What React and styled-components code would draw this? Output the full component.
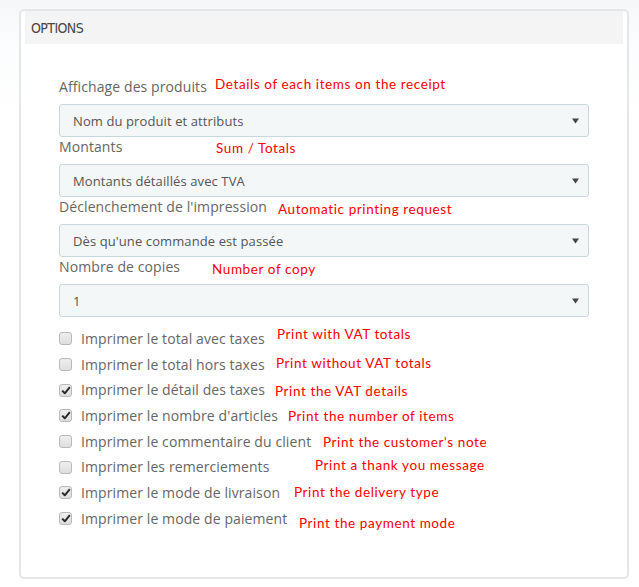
import React from "react";
import styled, { createGlobalStyle } from "styled-components";

const GlobalStyle = createGlobalStyle`
  html, body { margin: 0; padding: 0; }
  body {
    background: linear-gradient(#f5f7f9 0px, #fbfcfd 40px, #ffffff 120px);
    font-family: "Open Sans", "Liberation Sans", sans-serif;
  }
  * { box-sizing: border-box; }
`;

const Page = styled.div`
  padding: 9px 0 8px 19px;
`;

const Panel = styled.section`
  width: 610px;
  height: 570px;
  background: #fff;
  border: 2px solid #e4e6e8;
  border-radius: 5px;
  padding: 0 4px;
`;

const Header = styled.div`
  height: 33px;
  background: #f4f4f4;
  display: flex;
  align-items: center;
  padding-left: 6px;
  font-family: "Liberation Sans Narrow", "DejaVu Sans Condensed", sans-serif;
  font-size: 14px;
  color: #474747;
  letter-spacing: -0.6px;
`;

const Body = styled.div`
  padding: 33px 34px 0 34px;
`;

const FieldLabel = styled.div`
  position: relative;
  font-size: 14px;
  line-height: 20px;
  color: #666;
  letter-spacing: 0.1px;
`;

const Note = styled.span`
  position: absolute;
  left: ${(p) => p.$x}px;
  top: ${(p) => p.$y}px;
  font-family: Lato, "Liberation Sans", sans-serif;
  font-size: 13.5px;
  letter-spacing: 0.6px;
  line-height: 16px;
  color: #ff0000;
  white-space: nowrap;
`;

const SelectBox = styled.div`
  margin-top: 7px;
  height: 33px;
  background: #f4f7f8;
  border: 1px solid #c8d7dc;
  border-radius: 3px;
  display: flex;
  align-items: center;
  justify-content: space-between;
  padding: 0 9px 0 13px;
  font-size: 13px;
  color: #555;
  letter-spacing: 0.1px;
`;

const Checks = styled.div`
  margin-top: 9px;
  display: flex;
  flex-direction: column;
`;

const CheckRow = styled.label`
  position: relative;
  height: 25.7px;
  display: flex;
  align-items: center;
  gap: 9px;
  font-size: 14px;
  color: #666;
  line-height: 20px;
  letter-spacing: 0.1px;
`;

const Box = styled.span`
  width: 13px;
  height: 13px;
  border: 1px solid #b9b9b9;
  border-radius: 3px;
  background: linear-gradient(#eeeeee, #dedede);
  display: flex;
  align-items: center;
  justify-content: center;
  flex: none;
`;

const Arrow = () => (
  <svg width="7" height="6" viewBox="0 0 7 6">
    <path d="M0 0.5 H7 L3.5 5.5 Z" fill="#444" />
  </svg>
);

const Check = () => (
  <svg width="10" height="9" viewBox="0 0 10 9">
    <path d="M1.2 4.6 L3.8 7.3 L8.8 1.2" fill="none" stroke="#2b2b2b" strokeWidth="2" strokeLinejoin="round" />
  </svg>
);

const fields = [
  { label: "Affichage des produits", value: "Nom du produit et attributs", note: "Details of each items on the receipt", x: 156, y: -1 },
  { label: "Montants", value: "Montants détaillés avec TVA", note: "Sum / Totals", x: 157, y: 3 },
  { label: "Déclenchement de l'impression", value: "Dès qu'une commande est passée", note: "Automatic printing request", x: 219, y: 4 },
  { label: "Nombre de copies", value: "1", note: "Number of copy", x: 153, y: 4 },
];

const checks = [
  { label: "Imprimer le total avec taxes", checked: false, note: "Print with VAT totals", x: 218, y: 0 },
  { label: "Imprimer le total hors taxes", checked: false, note: "Print without VAT totals", x: 217, y: 3 },
  { label: "Imprimer le détail des taxes", checked: true, note: "Print the VAT details", x: 216, y: 6 },
  { label: "Imprimer le nombre d'articles", checked: true, note: "Print the number of items", x: 229, y: 5 },
  { label: "Imprimer le commentaire du client", checked: false, note: "Print the customer's note", x: 264, y: 5 },
  { label: "Imprimer les remerciements", checked: false, note: "Print a thank you message", x: 256, y: 3 },
  { label: "Imprimer le mode de livraison", checked: true, note: "Print the delivery type", x: 235, y: 4 },
  { label: "Imprimer le mode de paiement", checked: true, note: "Print the payment mode", x: 240, y: 9 },
];

export default function App() {
  return (
    <>
      <GlobalStyle />
      <Page>
        <Panel>
          <Header>OPTIONS</Header>
          <Body>
            {fields.map((f) => (
              <div key={f.label}>
                <FieldLabel>
                  {f.label}
                  <Note $x={f.x} $y={f.y}>{f.note}</Note>
                </FieldLabel>
                <SelectBox>
                  <span>{f.value}</span>
                  <Arrow />
                </SelectBox>
              </div>
            ))}
            <Checks>
              {checks.map((c) => (
                <CheckRow key={c.label}>
                  <Box>{c.checked && <Check />}</Box>
                  <span>{c.label}</span>
                  <Note $x={c.x} $y={c.y}>{c.note}</Note>
                </CheckRow>
              ))}
            </Checks>
          </Body>
        </Panel>
      </Page>
    </>
  );
}
